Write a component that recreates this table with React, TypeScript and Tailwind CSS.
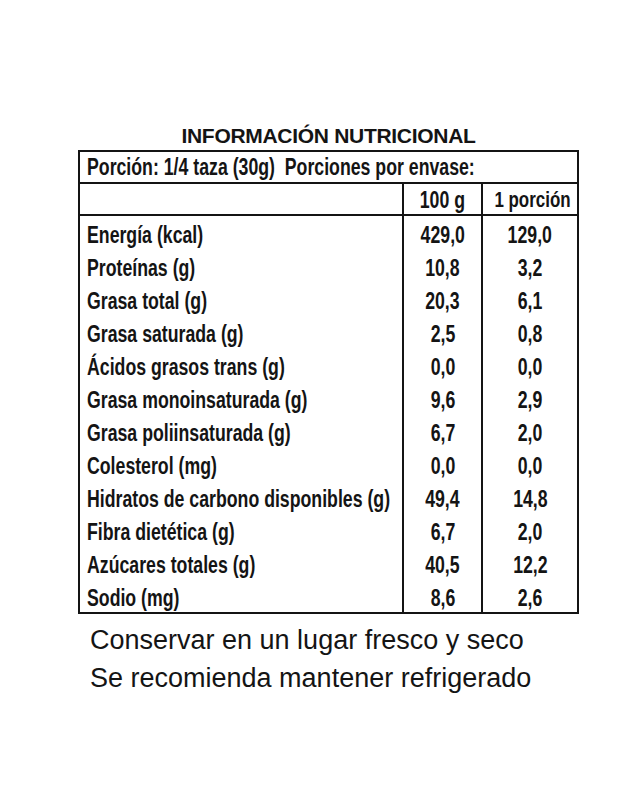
const rows: [string, string, string][] = [
  ["Energía (kcal)", "429,0", "129,0"],
  ["Proteínas (g)", "10,8", "3,2"],
  ["Grasa total (g)", "20,3", "6,1"],
  ["Grasa saturada (g)", "2,5", "0,8"],
  ["Ácidos grasos trans (g)", "0,0", "0,0"],
  ["Grasa monoinsaturada (g)", "9,6", "2,9"],
  ["Grasa poliinsaturada (g)", "6,7", "2,0"],
  ["Colesterol (mg)", "0,0", "0,0"],
  ["Hidratos de carbono disponibles (g)", "49,4", "14,8"],
  ["Fibra dietética (g)", "6,7", "2,0"],
  ["Azúcares totales (g)", "40,5", "12,2"],
  ["Sodio (mg)", "8,6", "2,6"],
];

// no narrow face installed, so squeeze Arial-metric bold horizontally
const Narrow = ({ children, center }: { children: React.ReactNode; center?: boolean }) => (
  <span
    className={`inline-block whitespace-pre scale-x-[0.77] ${center ? "origin-center" : "origin-left"}`}
  >
    {children}
  </span>
);

export default function App() {
  return (
    <div className="min-h-[810px] w-[635px] bg-white pt-[122px] text-[#141414]">
      <div className="ml-[78px] w-[501px]">
        <h1 className="text-center font-['Liberation_Sans',Arial,sans-serif] text-[21px] font-bold leading-[28px] tracking-[-0.3px]">
          INFORMACIÓN NUTRICIONAL
        </h1>

        <div className="border-2 border-[#141414] font-['Liberation_Sans',Arial,sans-serif] text-[23px] font-bold leading-[26px]">
          {/* Porción row */}
          <div className="flex h-[32px] items-end border-b-2 border-[#141414] pb-[2px] pl-[7px]">
            <Narrow>Porción: 1/4 taza (30g)  Porciones por envase:</Narrow>
          </div>

          {/* Header */}
          <div className="grid h-[32px] grid-cols-[324px_79px_1fr] border-b-2 border-[#141414]">
            <div className="border-r-2 border-[#141414]" />
            <div className="flex items-end justify-center border-r-2 border-[#141414] pb-[1px]">
              <Narrow center>100 g</Narrow>
            </div>
            <div className="flex items-end justify-center pb-[1px] text-[22px]">
              <Narrow center>1 porción</Narrow>
            </div>
          </div>

          {/* Data rows */}
          <div className="grid grid-cols-[324px_79px_1fr]">
            {rows.map(([label, a, b]) => (
              <div key={label} className="contents">
                <div className="flex h-[33px] items-end border-r-2 border-[#141414] pb-[1px] pl-[7px]">
                  <Narrow>{label}</Narrow>
                </div>
                <div className="flex h-[33px] items-end justify-center border-r-2 border-[#141414] pb-[1px]">
                  <Narrow center>{a}</Narrow>
                </div>
                <div className="flex h-[33px] items-end justify-center pb-[1px]">
                  <Narrow center>{b}</Narrow>
                </div>
              </div>
            ))}
          </div>
        </div>

        <div className="mt-[7px] pl-[12px] font-['Liberation_Sans',Arial,sans-serif] text-[27px] leading-[38px]">
          <p>Conservar en un lugar fresco y seco</p>
          <p>Se recomienda mantener refrigerado</p>
        </div>
      </div>
    </div>
  );
}
